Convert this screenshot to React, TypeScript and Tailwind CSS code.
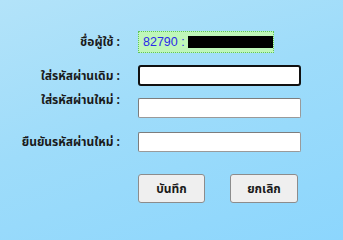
import React from "react";

const font = { fontFamily: '"Noto Sans Thai", "Noto Sans", "DejaVu Sans", sans-serif' };

export default function App() {
  return (
    <div
      className="w-full h-screen min-h-[220px] overflow-hidden bg-[linear-gradient(160deg,#b3e3f9_0%,#9edcfa_45%,#8cd6fd_100%)] text-[12px] font-bold text-[#1a1a1a]"
      style={font}
    >
      <div className="pt-[31px] flex flex-col">
        <div className="flex items-center h-[22px]">
          <div className="w-[121px] text-right pr-[1px] leading-none">ชื่อผู้ใช้ :</div>
          <div className="ml-[17px] w-[136px] h-[22px] bg-[#bff7b9] border border-dotted border-[#5fc45a] flex items-center pl-[4px] gap-[3px] whitespace-nowrap overflow-hidden">
            <span className="shrink-0 text-[#2a2aea] font-normal text-[12.5px] leading-none" style={{ fontFamily: '"Liberation Sans", Arial, sans-serif' }}>82790 :</span>
            <span className="shrink-0 w-[87px] h-[12px] bg-black" />
          </div>
        </div>
        <div className="flex items-center h-[21px] mt-[12px]">
          <div className="w-[121px] text-right pr-[1px] leading-none">ใส่รหัสผ่านเดิม :</div>
          <div className="ml-[17px] w-[163px] h-[21px] bg-white border-2 border-[#111] rounded-[3px]" />
        </div>
        <div className="flex h-[20px] mt-[12px]">
          <div className="w-[121px] text-right pr-[1px] leading-none -mt-[4px]">ใส่รหัสผ่านใหม่ :</div>
          <div className="ml-[17px] w-[163px] h-[20px] bg-white border border-[#9a9a9a] border-t-[#7d7d7d] border-l-[#7d7d7d] rounded-[2px]" />
        </div>
        <div className="flex items-center h-[20px] mt-[14px]">
          <div className="w-[121px] text-right pr-[1px] leading-none">ยืนยันรหัสผ่านใหม่ :</div>
          <div className="ml-[17px] w-[163px] h-[20px] bg-white border border-[#9a9a9a] border-t-[#7d7d7d] border-l-[#7d7d7d] rounded-[2px]" />
        </div>
        <div className="flex mt-[22px] ml-[138px] gap-[25px]">
          <button className="w-[67px] h-[29px] bg-[#efefef] border border-[#8c8c8c] rounded-[3px] font-bold text-[12px] text-[#1a1a1a]">บันทึก</button>
          <button className="w-[68px] h-[29px] bg-[#efefef] border border-[#8c8c8c] rounded-[3px] font-bold text-[12px] text-[#1a1a1a]">ยกเลิก</button>
        </div>
      </div>
    </div>
  );
}
